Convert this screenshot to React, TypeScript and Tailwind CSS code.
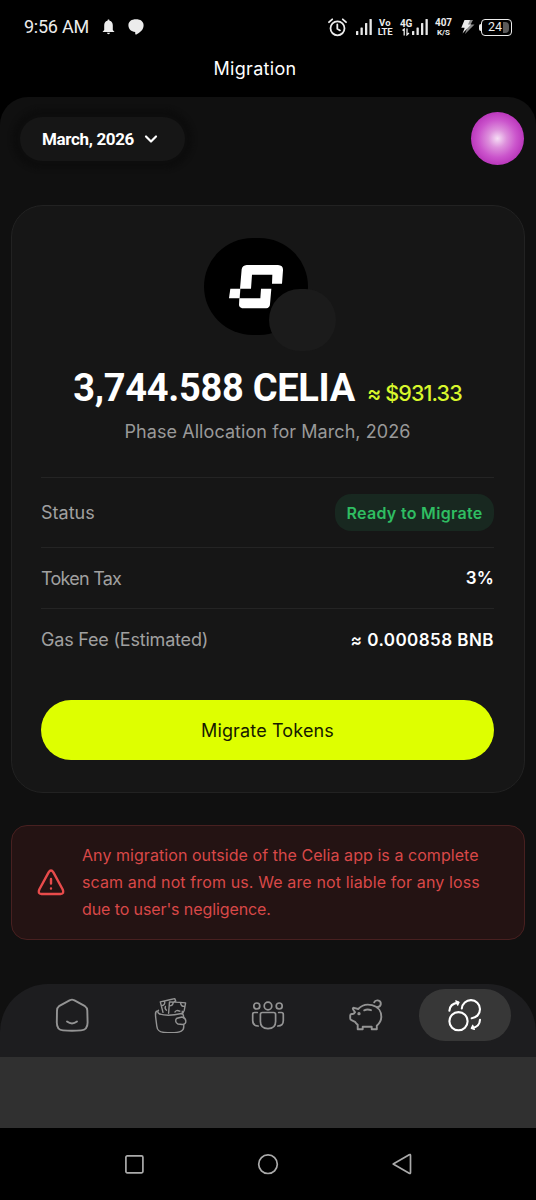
import type { ReactNode } from "react"
import { ChevronDown } from "lucide-react"

const details = [
  { label: "Token Tax", value: "3%", row: "h-[61px]", labelClass: "tracking-[-0.75px]", valueClass: "tracking-[0.2px]" },
  { label: "Gas Fee (Estimated)", value: "≈ 0.000858 BNB", row: "h-[62px]", labelClass: "tracking-[-0.2px]", valueClass: "tracking-[0.45px]" },
]

const warningLines = [
  { text: "Any migration outside of the Celia app is a complete", className: "tracking-[0.06px]" },
  { text: "scam and not from us. We are not liable for any loss", className: "tracking-[0.12px]" },
  { text: "due to user's negligence.", className: "tracking-[-0.1px]" },
]

function SignalBars() {
  return (
    <svg className="h-4 w-4" viewBox="0 0 16 16" fill="#e8e8e8">
      <rect x="0" y="12" width="2.3" height="4" rx="0.6" />
      <rect x="4.5" y="8.5" width="2.3" height="7.5" rx="0.6" />
      <rect x="9" y="4" width="2.3" height="12" rx="0.6" />
      <rect x="13.5" y="0" width="2.3" height="16" rx="0.6" />
    </svg>
  )
}

function StatusBar() {
  return (
    <div className="flex h-[54px] items-center justify-between pr-[24px] pl-[24px] text-[#ececec]">
      <div className="flex items-center">
        <span className="w-[65px] font-[Roboto] text-[18px] leading-none tracking-[-0.25px] whitespace-nowrap">9:56 AM</span>
        <svg className="ml-[13px] h-4 w-[13px]" viewBox="0 0 12 16" fill="currentColor">
          <path d="M6 0.5C6.8 .5 7 1 7 1.7C9.4 2.2 10.3 4 10.3 6.5V11L12 13H0L1.7 11V6.5C1.7 4 2.6 2.2 5 1.7C5 1 5.2.5 6 .5ZM4.5 13.8H7.5C7.5 15.6 4.5 15.6 4.5 13.8Z" />
        </svg>
        <svg className="ml-[13px] h-4 w-4" viewBox="0 0 16 16" fill="currentColor">
          <path d="M8 .3C12.5 .3 15.6 2.4 15.6 6.3C15.6 11.3 11.5 13.8 8.4 15.4C7.5 15.8 7.1 15.4 7.2 12.9C3.2 12.7.4 10.1.4 6.3C.4 2.4 3.5.3 8 .3Z" />
        </svg>
      </div>
      <div className="flex items-center">
        <svg className="h-[19px] w-[19px]" viewBox="0 0 19 19" fill="none" stroke="currentColor" strokeWidth="1.8" strokeLinecap="round">
          <circle cx="9.5" cy="10.3" r="7" />
          <path d="M9.3 6.5V10.8L12 12.4M1 4.2L4.2 1.3M18 4.2L14.8 1.3" />
        </svg>
        <div className="ml-[9px]"><SignalBars /></div>
        <div className="ml-[5px] flex w-[16px] flex-col items-center font-[Roboto] font-bold">
          <span className="text-[9.5px] leading-[9px] tracking-[0.4px]">Vo</span>
          <span className="text-[9.5px] leading-[9px] tracking-[-0.3px]">LTE</span>
        </div>
        <div className="ml-[7px] flex w-[12px] flex-col items-center font-[Roboto] text-[10px] leading-[9px] font-bold">
          <span className="tracking-[-0.2px]">4G</span>
          <svg className="h-2 w-2" viewBox="0 0 8 8" fill="none" stroke="currentColor" strokeWidth="1.3">
            <path d="M.5 2.5L2.2 1V7.5M5 .5V6.8L7 5" />
          </svg>
        </div>
        <div className="flex"><SignalBars /></div>
        <div className="ml-[7px] flex w-[17px] flex-col items-center font-[Roboto] font-bold">
          <span className="text-[10px] leading-[10px]">407</span>
          <span className="text-[8px] leading-[9px]">K/S</span>
        </div>
        <svg className="ml-[9px] h-4 w-[14px]" viewBox="0 0 14 16">
          <path d="M7 1H12L9.6 5.5H13.5L4 15L6 9.3H3Z" fill="#8a8a8a" />
          <path d="M3.5 1H9L7 5.5H10L1.5 14.5L3.8 8.8H.3Z" fill="currentColor" />
        </svg>
        <div className="ml-[4px] h-[7px] w-[2px] rounded-l bg-[#ececec]" />
        <div className="relative flex h-[17px] w-[31px] items-center rounded-[4px] border border-[#ececec] pl-[6px] font-[Roboto] text-[12.5px] leading-none">
          <span className="absolute top-[2px] right-[2px] h-[11px] w-[6px] rounded-r-sm bg-[#5a5a5a]" />
          <span className="relative">24</span>
        </div>
      </div>
    </div>
  )
}

function TokenLogo() {
  return (
    <div className="relative ml-[163px] h-[97px] w-[104px] rounded-full bg-black">
      <svg className="h-full w-full" viewBox="42 39 312 291" fill="white">
        <path d="M170 120H264Q280 121 279 136L276 176H246L247 149H186L183 191H150L155 133Q157 121 170 120Z" />
        <path d="M121 191H151L149 220H117Z" />
        <path d="M213 191H244L240 238Q239 249 229 250H156Q148 249 147 241L148 220H211Z" />
      </svg>
      <div className="absolute top-[51px] left-[65px] h-[62px] w-[67px] rounded-full bg-[#1b1b1b]" />
    </div>
  )
}

function NavItem({ children, active = false }: { children: ReactNode; active?: boolean }) {
  return (
    <button
      className={
        active
          ? "ml-[4px] flex h-[52px] w-[92px] items-center justify-center rounded-full bg-[#373737] text-white"
          : "flex h-[52px] w-[98px] items-center justify-center text-[#949494]"
      }
    >
      <svg className="h-9 w-9" viewBox="0 0 36 36" fill="none" stroke="currentColor" strokeWidth="1.9" strokeLinecap="round" strokeLinejoin="round">
        {children}
      </svg>
    </button>
  )
}

function BottomNav() {
  return (
    <nav className="flex h-[73px] items-start rounded-t-[48px] bg-[#1d1d1f] pt-[5px] pl-[23px]">
      <NavItem>
        <path d="M16 3.2Q18 2 20 3.2L31 9.2Q33.3 10.7 33.3 13.5L33.6 25.5Q33.6 33 27 33.4Q18 34.2 9 33.4Q2.8 33 2.8 25.5L3 13.5Q3 10.7 5 9.2Z" />
        <path d="M13 24.6Q18 28.3 23 24.6" />
      </NavItem>
      <NavItem>
        <g strokeWidth="1.4" transform="translate(1 .7)">
          <path d="M4.3 13.2C2.3 13.8 2.3 15.3 2.6 19L3.8 28.5C4.3 33 6.3 34.3 11 34.7C18 35.3 25 35 28.3 33.4C31 32.2 31 29.5 30.7 27" />
          <path d="M7 16.4C13 18.2 20 17.8 28.5 15.8C30.2 15.8 30.6 17.4 30.8 20" />
          <path d="M5.5 12.5C4 14 5 15.6 7 16.4M29.2 13.5C30.2 14.5 29.7 15.4 28.5 15.8" />
          <path d="M24 20.5L29 19.3C33.5 20.3 34.5 26 29.5 26.8L25 26.3C22.2 25.2 22 21.8 24 20.5Z" />
          <path d="M10 14.7L7.3 4.2L16.8 2L21.7.9L22.8 3.6M8.3 8C11 8 12.4 6 11.5 3.4M13.5 12.5Q11.5 11 12.4 8.8" />
          <path d="M15.6 15.5L16.5 4.2L27 4.7L32.6 5.2L31.3 12.5L29.5 16M16.2 8.2Q20.2 8 20.2 4.5M27.5 5.1Q28 9 31.8 8.7M22 14.4Q23 11.8 26.8 13.5M20.3 4.7L22 3.6" />
        </g>
      </NavItem>
      <NavItem>
        <g strokeWidth="1.7">
          <circle cx="6.8" cy="9" r="3" /><circle cx="18" cy="9" r="3.8" /><circle cx="29.2" cy="9" r="3" />
          <path d="M12.4 15.5H23.6Q25.6 15.5 25.6 17.5V24.5Q25.6 31.6 18 31.6Q10.4 31.6 10.4 24.5V17.5Q10.4 15.5 12.4 15.5Z" />
          <path d="M7.3 15.5H4.6Q2.7 15.5 2.7 17.4V23.5Q2.7 29 8.2 29M28.7 15.5H31.4Q33.3 15.5 33.3 17.4V23.5Q33.3 29 27.8 29" />
        </g>
      </NavItem>
      <NavItem>
        <path d="M7 15.2L5 12.2Q4.4 10.9 6 10.8L10.2 12C13.5 8.4 18.5 6.8 24 8.2C30.5 9.8 33.5 15 33.3 20.3C33.1 25 30.5 27.3 28.8 28.8V32.3H23.7V29.7H14.7V32.3H9.7V27.8Q8 26.4 7 24.8L3.5 23.2Q2.2 22.6 2.2 21.2V18.5Q2.2 17.2 3.6 17H4.8Q6.3 16.8 7 15.2" />
        <path d="M16.2 13.3Q19.5 11.7 23 13.2M26.2 5.3Q27 3.2 29.7 3.4Q33.1 3.9 32.8 7.1Q32.4 9.8 29.2 10.2" />
        <circle cx="11" cy="16.7" r=".7" fill="currentColor" />
      </NavItem>
      <NavItem active>
        <g strokeWidth="2.1">
          <circle cx="11.5" cy="24.2" r="9.1" />
          <path d="M14.8 11.5A9.1 9.1 0 1 1 24.7 21.3" />
          <path d="M2.4 13.8Q2.8 6.5 11.3 5.6" />
          <path d="M8.8 3.8L12 5.2L10.7 8.2Z" fill="currentColor" strokeWidth="1.2" />
          <path d="M33 22.7Q32.6 30.2 24.9 31" />
          <path d="M25.7 28.2L24.3 31.4L27.4 32.5Z" fill="currentColor" strokeWidth="1.2" />
        </g>
      </NavItem>
    </nav>
  )
}

function SystemNav() {
  return (
    <div className="flex h-[72px] items-center justify-between bg-black px-[124px]">
      <svg className="h-[20px] w-[20px]" viewBox="0 0 20 20" fill="none" stroke="#aaa" strokeWidth="1.7">
        <rect x="1.9" y="1.9" width="17" height="17" rx="1.3" />
      </svg>
      <svg className="h-[22px] w-[22px]" viewBox="0 0 22 22" fill="none" stroke="#aaa" strokeWidth="1.7">
        <circle cx="11" cy="11.2" r="9.3" />
      </svg>
      <svg className="h-[22px] w-[20px]" viewBox="0 0 20 22" fill="none" stroke="#aaa" strokeWidth="1.7" strokeLinejoin="round">
        <path d="M1.2 11L17.2 1.7Q18.5 1 18.5 2.5V19.5Q18.5 21 17.2 20.3Z" />
      </svg>
    </div>
  )
}

export default function App() {
  return (
    <div className="flex h-[1200px] w-[536px] flex-col overflow-hidden bg-black font-[Inter,sans-serif] text-white">
      <StatusBar />
      <header className="flex h-[43px] items-start justify-center pr-[26px]">
        <h1 className="pt-[1px] text-[18px] leading-[28px] tracking-[0.3px]">Migration</h1>
      </header>

      <main className="flex h-[960px] flex-col rounded-t-[28px] bg-[#101010]">
        <div className="flex items-center justify-between pt-[15px] pr-[12px] pl-[20px]">
          <button className="flex h-[44px] w-[165px] items-center rounded-full bg-[#161616] pt-[1px] pl-[22px] shadow-[0_0_4px_8px_#0d0d0d]">
            <span className="w-[92px] font-[Roboto] text-[17px] leading-none font-bold tracking-[-0.35px] whitespace-nowrap">March, 2026</span>
            <ChevronDown className="ml-[7px] h-[20px] w-[20px]" strokeWidth={2.6} />
          </button>
          <div className="h-[53px] w-[53px] rounded-full bg-[radial-gradient(circle_at_50%_50%,#f6def5_0%,#dd91dc_24%,#cb55cc_50%,#b935bb_72%,#b22fb5_100%)]" />
        </div>

        <section className="mx-[11px] mt-[40px] h-[588px] rounded-[32px] border border-[#222] bg-[#161616] pt-[32px] pr-[30px] pl-[29px]">
          <TokenLogo />
          <div className="mt-[30px] flex h-[46px] items-baseline justify-center gap-[12px] whitespace-nowrap">
            <span className="font-[Roboto] text-[38px] leading-[46px] font-bold tracking-[-0.3px]">3,744.588 CELIA</span>
            <span className="text-[21.5px] font-medium tracking-[-0.9px] text-[#d9f72c]">≈ $931.33</span>
          </div>
          <p className="mt-[7px] h-[28px] text-center text-[18px] leading-[28px] tracking-[0.07px] text-[#999]">Phase Allocation for March, 2026</p>

          <div className="mt-[31px] flex h-[70px] items-center justify-between border-t border-[#242424]">
            <span className="text-[18px] text-[#a0a0a0]">Status</span>
            <span className="flex h-[37px] w-[159px] items-center justify-center rounded-[16px] bg-[#182820] text-[16px] font-semibold tracking-[0.3px] whitespace-nowrap text-[#2fbd62]">Ready to Migrate</span>
          </div>
          {details.map((item) => (
            <div key={item.label} className={`flex items-center justify-between border-t border-[#242424] ${item.row}`}>
              <span className={`text-[18px] text-[#a0a0a0] ${item.labelClass}`}>{item.label}</span>
              <span className={`pt-[2px] text-[17px] font-semibold ${item.valueClass}`}>{item.value}</span>
            </div>
          ))}
          <button className="mt-[30px] h-[60px] w-full rounded-full bg-[#deff00] text-[18px] tracking-[0.15px] text-[#171a00]">Migrate Tokens</button>
        </section>

        <section className="mx-[11px] mt-[32px] flex h-[115px] items-center rounded-[16px] border border-[#482020] bg-[#241313] pl-[24px] text-[#d94848]">
          <svg className="h-[30px] w-[30px] shrink-0 text-[#e84b4b]" viewBox="0 0 30 30" fill="none" stroke="currentColor" strokeWidth="2.4" strokeLinecap="round" strokeLinejoin="round">
            <path d="M12.6 4.4Q15 0.6 17.4 4.4L26.7 21.5Q28.6 25.8 24.5 26H5.5Q1.4 25.8 3.3 21.5Z" />
            <path d="M15 11V15.5M15 20.5V20.6" />
          </svg>
          <div className="ml-[16px] text-[16px] leading-[27px]">
            {warningLines.map((line) => (
              <p key={line.text} className={`whitespace-nowrap ${line.className}`}>{line.text}</p>
            ))}
          </div>
        </section>

        <div className="mt-auto">
          <BottomNav />
        </div>
      </main>
      <div className="h-[71px] bg-[#303030]" />
      <SystemNav />
    </div>
  )
}
